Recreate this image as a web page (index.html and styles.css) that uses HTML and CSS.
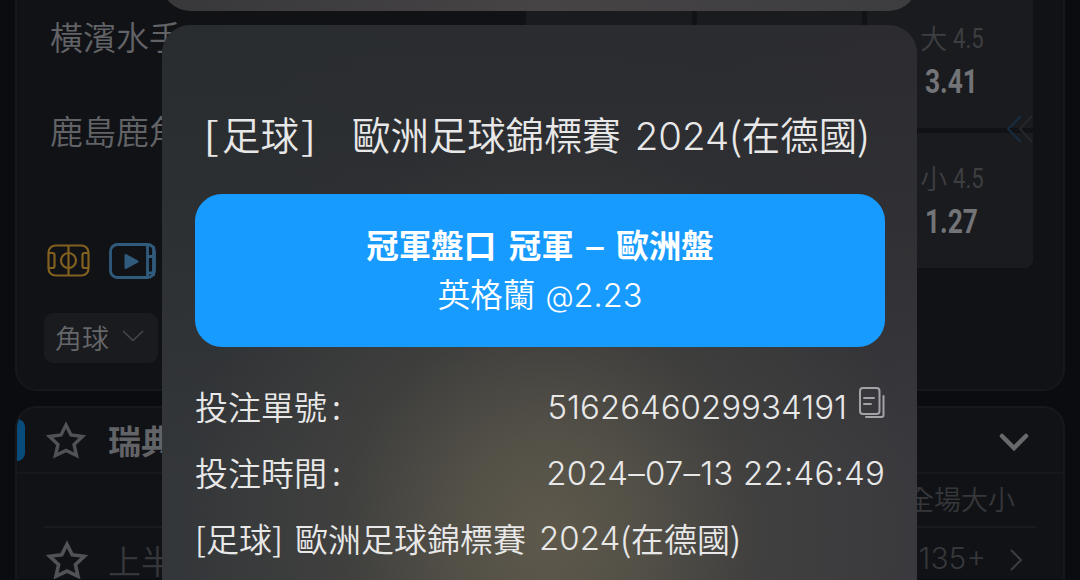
FILE: index.html
```
<!DOCTYPE html>
<html lang="zh-Hant">

<head>
    <meta charset="UTF-8">
    <meta name="viewport" content="width=device-width, initial-scale=1.0">
    <link rel="stylesheet" href="styles.css">
    <title>投注單</title>
</head>

<body>
    <main class="page">
        <section class="card match">
            <div class="teams">
                <div class="team">橫濱水手</div>
                <div class="team">鹿島鹿角</div>
                <div class="icons">
                    <svg width="44" height="34" viewBox="0 0 44 34" fill="none" stroke="#82601f" stroke-width="2.2">
                        <rect x="1.5" y="1.5" width="40" height="30" rx="7" />
                        <path d="M21.5 1.5v30M1.5 9h4q2 0 2 2v11q0 2-2 2h-4M41.5 9h-4q-2 0-2 2v11q0 2 2 2h4" />
                        <circle cx="21.5" cy="16.5" r="7.5" />
                    </svg>
                    <svg width="48" height="36" viewBox="0 0 48 36" fill="none" stroke="#315b7d" stroke-width="2.8">
                        <rect x="1.5" y="1.5" width="44" height="33" rx="7" />
                        <path d="M38.5 2v32M38 13.5h7M44.5 3v30M38 30h7" />
                        <path d="M16.5 12v13l12-6.5z" fill="#315b7d" stroke-width="2" stroke-linejoin="round" />
                    </svg>
                </div>
                <div class="market">
                    <span>角球</span>
                    <svg width="24" height="14" viewBox="0 0 24 14" fill="none" stroke="#48494c" stroke-width="1.5">
                        <path d="M2 2l10 9.5L22 2" />
                    </svg>
                </div>
            </div>
            <div class="odds">
                <div class="cell"></div>
                <div class="cell"></div>
                <div class="cell">
                    <div class="line">大<i>4.5</i></div>
                    <div class="price">3.41</div>
                </div>
                <div class="cell"></div>
                <div class="cell"></div>
                <div class="cell">
                    <div class="line">小<i>4.5</i></div>
                    <div class="price">1.27</div>
                </div>
                <svg class="slide" width="28" height="30" viewBox="0 0 28 30" fill="none" stroke-width="2">
                    <path d="M27 2L15 15l12 13" stroke="#25272b" />
                    <path d="M16 2L3 15l13 13" stroke="#182c40" />
                </svg>
            </div>
        </section>

        <section class="card league">
            <header class="league-head">
                <svg width="40" height="38" viewBox="0 0 40 38" fill="none" stroke="#515255" stroke-width="3.4">
                    <path d="M20 4l5 10 11.5 1.5-8.5 8 2.5 11L20 29.5 9.500 34.5 12 23.5 3.5 15.5 15 14z" />
                </svg>
                <b>瑞典超</b>
                <svg class="arrow" width="32" height="20" viewBox="0 0 32 20" fill="none" stroke="#68696b" stroke-width="4.5" stroke-linecap="round">
                    <path d="M4 4l12 12L28 4" />
                </svg>
            </header>
            <div class="columns">全場大小</div>
            <div class="half">
                <svg width="42" height="40" viewBox="0 0 40 38" fill="none" stroke="#515255" stroke-width="3.4">
                    <path d="M20 4l5 10 11.5 1.5-8.5 8 2.5 11L20 29.5 9.5 34.5 12 23.5 3.5 15.5 15 14z" />
                </svg>
                <span>上半</span>
                <span class="more">135+</span>
                <svg width="14" height="22" viewBox="0 0 14 22" fill="none" stroke="#3c3d40" stroke-width="2">
                    <path d="M2 1l10 10L2 21" />
                </svg>
            </div>
        </section>
    </main>

    <div class="sheet-top"></div>

    <!-- bet slip -->
    <div class="slip">
        <h1><span class="tag"><i>[</i>足球<i>]</i></span><span class="name">歐洲足球錦標賽</span><span class="num">2024</span>(在德國)</h1>
        <div class="pick">
            <strong>冠軍盤口 冠軍 <em>–</em> 歐洲盤</strong>
            <span>英格蘭 <i><small>@</small>2.23</i></span>
        </div>
        <div class="row">
            <span>投注單號<small>:</small></span>
            <span class="value">
                <span class="order">5162646029934191</span>
                <svg width="26" height="32" viewBox="0 0 26 32" fill="none" stroke="#a2a2a7" stroke-width="2" stroke-linecap="round">
                    <rect x="1" y="1" width="19.5" height="26" rx="3" />
                    <path d="M5 11h10M5 17h7M24.5 9v19a2 2 0 0 1-2 2H7" />
                </svg>
            </span>
        </div>
        <div class="row">
            <span>投注時間<small>:</small></span>
            <span class="value date">2024–07–13 22:46:49</span>
        </div>
        <div class="row event"><span class="tag">[足球]</span><span class="name">歐洲足球錦標賽</span><span class="num">2024</span>(在德國)</div>
    </div>
</body>

</html>
```

FILE: styles.css
```
* {
    margin: 0;
    padding: 0;
    box-sizing: border-box;
}

body {
    position: relative;
    height: 580px;
    overflow: hidden;
    background-color: #0b0c10;
    font-family: "Noto Sans CJK TC", sans-serif;
    font-weight: 350;
    white-space: nowrap;
}

svg {
    display: block;
    flex: none;
}

i,
em {
    font-style: normal;
}

.page {
    padding: 0 15px;
    height: 580px;
    overflow: hidden;
}

.card {
    background-color: #111216;
    border: 2px solid #17181b;
    border-radius: 22px;
}

.match {
    display: flex;
    justify-content: space-between;
    height: 391px;
    border-top: none;
    border-radius: 0 0 22px 22px;
    padding: 0 30px 0 27px;
}

.team {
    height: 94px;
    padding-left: 6px;
    line-height: 72px;
    font-size: 33px;
    color: #626366;
}

.icons {
    display: flex;
    align-items: center;
    gap: 18px;
    height: 70px;
    margin-top: 38px;
    padding-left: 3px;
}

.market {
    display: flex;
    align-items: center;
    gap: 12px;
    width: 114px;
    height: 50px;
    margin-top: 17px;
    padding-left: 11px;
    border-radius: 9px;
    background-color: #1a1b1e;
    color: #66676a;
    font-size: 27px;
}

.market span {
    margin-top: -2px;
}

.market svg {
    margin-top: -4px;
}

.odds {
    position: relative;
    display: grid;
    grid-template-columns: repeat(3, 1fr);
    grid-template-rows: 128px 135px;
    gap: 5px;
    width: 507px;
}

.cell {
    background-color: #1a1b1e;
    text-align: center;
}

.cell:last-of-type {
    border-radius: 0 0 8px 0;
}

.line {
    display: flex;
    justify-content: center;
    gap: 6px;
    margin-top: 19px;
    padding-left: 9px;
    height: 38px;
    line-height: 38px;
    font-size: 27px;
    color: #3d3e41;
}

.line i {
    width: 36px;
    padding-top: 1px;
    font-family: Roboto, sans-serif;
    font-weight: 400;
    transform: scaleX(.82);
    transform-origin: left;
}

.cell:last-of-type .line {
    margin-top: 26px;
}

.price {
    height: 50px;
    line-height: 50px;
    padding-left: 4px;
    font-family: Roboto, sans-serif;
    font-weight: 700;
    font-size: 33px;
    color: #737477;
    transform: scaleX(.8);
}

.slide {
    position: absolute;
    right: 0;
    top: 114px;
}

.league {
    height: 173px;
    margin-top: 15px;
    border-bottom: none;
    border-radius: 22px 22px 0 0;
    overflow: hidden;
}

.league-head {
    display: flex;
    align-items: center;
    height: 66px;
    padding-right: 33px;
    border-bottom: 2px solid #17181b;
    color: #626366;
    font-size: 33px;
}

.league-head::before {
    content: "";
    width: 8px;
    height: 42px;
    margin-right: 21px;
    border-radius: 0 8px 8px 0;
    background-color: #094b7a;
}

.league-head b {
    margin-left: 22px;
}

.arrow {
    margin-left: auto;
    margin-top: 4px;
}

.columns {
    height: 54px;
    margin: 0 27px;
    padding-right: 21px;
    border-bottom: 2px solid #1a1b1e;
    text-align: right;
    line-height: 49px;
    font-size: 27px;
    color: #36373a;
}

.half {
    display: flex;
    align-items: center;
    height: 64px;
    padding: 0 40px 0 29px;
    font-size: 33px;
    line-height: 40px;
    color: #36373a;
}

.half span {
    margin-left: 20px;
}

.half .more {
    margin-left: auto;
    margin-right: 23px;
    margin-top: -4px;
    font-family: Inter, sans-serif;
    font-size: 30px;
}

.sheet-top {
    position: absolute;
    left: 162px;
    top: -45px;
    width: 755px;
    height: 56px;
    border-radius: 28px;
    background: linear-gradient(90deg, #38373a, #464445 50%, #3d3c3f);
}

.slip {
    position: absolute;
    left: 162px;
    top: 25px;
    width: 755px;
    height: 555px;
    padding: 72px 32px 0 33px;
    border-radius: 28px 28px 0 0;
    background:
        radial-gradient(ellipse 370px 400px at 385px 510px, #5e594b, rgba(90, 86, 74, .8) 25%, rgba(76, 74, 67, .45) 55%, rgba(60, 59, 56, 0)),
        linear-gradient(90deg, rgba(42, 49, 50, .4), rgba(56, 53, 59, .2)),
        linear-gradient(#28292e, #2e2f32 35%, #3a3a3e 80%);
    color: #e8e8e8;
    font-size: 33px;
}

.slip h1 {
    height: 97px;
    line-height: 72px;
    padding-left: 8px;
    font-size: 38.4px;
    font-weight: 350;
}

h1 .tag {
    display: inline-flex;
    width: 114px;
    margin-right: 35px;
    padding-left: 2px;
}

h1 .tag i {
    width: 17px;
    transform: scaleX(1.25);
}

h1 .tag i:last-child {
    padding-left: 3px;
}

.num,
.pick i,
.value {
    font-family: Inter, sans-serif;
}

h1 .num {
    margin-left: 14px;
}

.pick {
    display: flex;
    flex-direction: column;
    align-items: center;
    height: 153px;
    padding-top: 25px;
    border-radius: 27px;
    background-color: #189bff;
    color: #fff;
    font-size: 32.5px;
    line-height: 49px;
}

.pick strong {
    font-weight: 700;
    word-spacing: 5px;
}

.pick em {
    display: inline-block;
    transform: scaleX(1.2);
}

.pick i {
    margin-left: 3px;
}

.pick small {
    font-size: 29px;
}

.row {
    display: flex;
    align-items: center;
    justify-content: space-between;
    height: 66px;
    line-height: 46px;
    padding-bottom: 2px;
}

.pick + .row {
    margin-top: 27px;
}

.row small {
    margin-left: 5px;
    font-size: 33px;
}

.value {
    display: flex;
    align-items: center;
    gap: 12px;
    padding-top: 2px;
}

.value svg {
    margin-top: -8px;
}

.date {
    letter-spacing: .2px;
}

.event {
    justify-content: flex-start;
}

.event .tag {
    width: 100px;
}

.event .num {
    margin-left: 13px;
}
```
